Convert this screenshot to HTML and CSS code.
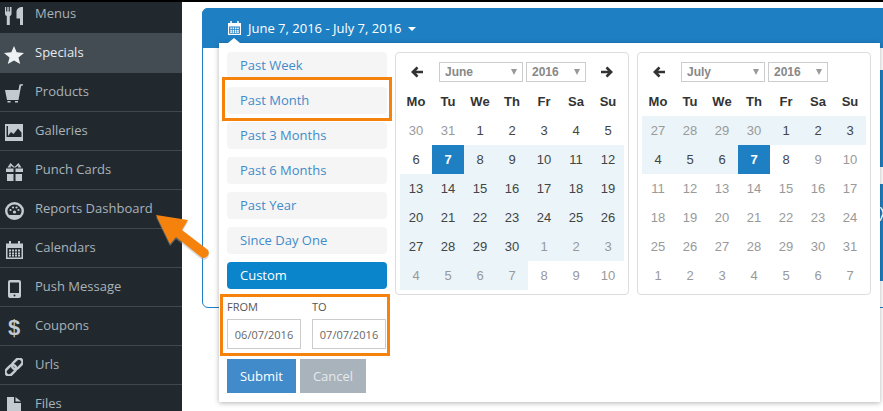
FILE: index.html
```html
<!DOCTYPE html>
<html lang="en">
<head>
<meta charset="utf-8">
<title>Reports Dashboard</title>
<link rel="stylesheet" href="styles.css">
</head>
<body>
<div class="topbar"></div>
<div class="layout">
  <nav class="sidebar">
    <ul class="nav">
      <li class="nav-item nav-first"><span class="nav-icon"><svg width="18" height="18" viewBox="0 0 18 18"><path d="M0 0h1.200v4.500h1.100V0h1.400v4.500h1.100V0H6.500v6.500C6.500 8 5.700 8.600 4.800 9v9H1.800V9C.8 8.600 0 8 0 6.500zM11.500 5C11.500 2 13.500 0 18 0v18h-3v-6.500h-3.500z"/></svg></span>Menus</li>
      <li class="nav-item nav-active"><span class="nav-icon"><svg width="20" height="18" viewBox="0 0 20 18"><path d="M10 0l2.700 6.300 7.300.600-5.500 4.600 1.700 6.500L10 14.500 3.800 18l1.700-6.500L0 6.900l7.300-.600z"/></svg></span>Specials</li>
      <li class="nav-item"><span class="nav-icon"><svg width="18" height="19" viewBox="0 0 18 19"><path d="M0 6h13.500l1-5.500L18 0l-.4 1.800h-1.500L13.500 16H2zM2.500 17h3v1.500h-3zM10 17h3v1.500h-3z"/></svg></span>Products</li>
      <li class="nav-item"><span class="nav-icon"><svg width="18" height="17" viewBox="0 0 18 17"><path fill-rule="evenodd" d="M0 0h18v17H0zM1.500 2v11h15V8.500L13 4.500 8.500 10 6 8l-3 4V2z"/><circle cx="4.500" cy="5" r="1.700"/></svg></span>Galleries</li>
      <li class="nav-item"><span class="nav-icon"><svg width="17" height="19" viewBox="0 0 17 19"><path fill-rule="evenodd" d="M0 6.500h7.500v3.500H0zM9.500 6.500H17v3.500H9.500zM1 12h6.500v7H1zM9.500 12H16v7H9.500zM1.500 5.500L4.500 1 8.500 5l4-4 3 4.500-3.500 0L12.500 3.500 9.500 5.500h-2L4.500 3.500l.5 2z"/></svg></span>Punch Cards</li>
      <li class="nav-item"><span class="nav-icon"><svg width="19" height="18" viewBox="0 0 19 18"><path fill-rule="evenodd" d="M9.500 0a9.500 9 0 1 1 0 18 9.500 9 0 0 1 0-18zM9.500 2.500a7 6.500 0 0 0-7 6.500c0 1.500.5 2.800 1.500 4h11c1-1.200 1.500-2.500 1.500-4a7 6.500 0 0 0-7-6.500z"/><circle cx="5.500" cy="8" r="1.100"/><circle cx="8" cy="5.500" r="1.100"/><circle cx="11.500" cy="5.500" r="1.100"/><circle cx="13.500" cy="8" r="1.100"/><circle cx="9.500" cy="10" r="1.600"/></svg></span>Reports Dashboard</li>
      <li class="nav-item"><span class="nav-icon"><svg width="17" height="18" viewBox="0 0 17 18"><path fill-rule="evenodd" d="M0 2.500h3V0h2v2.500h7V0h2v2.500h3V18H0zM1.500 7v9.500h14V7z"/><path d="M3 8.500h2v2H3zM6 8.500h2v2H6zM9 8.500h2v2H9zM12 8.500h2v2h-2zM3 11.500h2v2H3zM6 11.500h2v2H6zM9 11.500h2v2H9zM12 11.500h2v2h-2zM3 14h2v1.500H3zM6 14h2v1.500H6zM9 14h2v1.500H9zM12 14h2v1.500h-2z"/></svg></span>Calendars</li>
      <li class="nav-item"><span class="nav-icon"><svg width="13" height="18" viewBox="0 0 13 18"><path fill-rule="evenodd" d="M2 0h9a2 2 0 0 1 2 2v14a2 2 0 0 1-2 2H2a2 2 0 0 1-2-2V2a2 2 0 0 1 2-2zM2 2.500v10.500h9V2.500z"/><circle cx="6.500" cy="15.500" r="1" fill="#22292e"/></svg></span>Push Message</li>
      <li class="nav-item"><span class="nav-icon nav-dollar">$</span>Coupons</li>
      <li class="nav-item"><span class="nav-icon"><svg width="18" height="18" viewBox="0 0 18 18"><g fill="none" stroke="currentColor" stroke-width="2.500" transform="rotate(-45 9 9)"><rect x="-1.500" y="5.500" width="12" height="7" rx="3.500"/><rect x="7.500" y="5.500" width="12" height="7" rx="3.500"/></g></svg></span>Urls</li>
      <li class="nav-item"><span class="nav-icon"><svg width="14" height="18" viewBox="0 0 14 18"><path d="M0 0h7v6h7v12H0zM8.500 0L14 4.500H8.500z"/></svg></span>Files</li>
    </ul>
  </nav>
  <main class="main">
    <section class="panel">
      <header class="panel-head">
        <svg class="head-icon" width="13" height="14" viewBox="0 0 17 18"><path fill="#fff" fill-rule="evenodd" d="M0 2.500h3V0h2v2.500h7V0h2v2.500h3V18H0zM1.500 7v9.500h14V7z"/><path fill="#fff" d="M3 8.500h2v2H3zM6 8.500h2v2H6zM9 8.500h2v2H9zM12 8.500h2v2h-2zM3 11.500h2v2H3zM6 11.500h2v2H6zM9 11.500h2v2H9zM12 11.500h2v2h-2zM3 14h2v1.500H3zM6 14h2v1.500H6zM9 14h2v1.500H9zM12 14h2v1.500h-2z"/></svg>
        <span class="head-text">June 7, 2016 - July 7, 2016</span>
        <span class="caret"></span>
      </header>
      <div class="panel-body">
        <div class="stat"></div>
        <div class="stat"><svg class="stat-curve" width="4" height="14" viewBox="0 0 4 14"><path d="M0 0Q4 4 3 7 2 10 0 14" fill="none" stroke="#fff" stroke-width="1.500"/></svg></div>
      </div>
    </section>

    <div class="dropdown">
      <span class="notch"></span>
      <div class="ranges">
        <div class="range">Past Week</div>
        <div class="range">Past Month</div>
        <div class="range">Past 3 Months</div>
        <div class="range">Past 6 Months</div>
        <div class="range">Past Year</div>
        <div class="range">Since Day One</div>
        <div class="range range-active">Custom</div>
        <div class="inputs">
          <label class="field"><span class="field-label">FROM</span><span class="field-input">06/07/2016</span></label>
          <label class="field"><span class="field-label">TO</span><span class="field-input">07/07/2016</span></label>
        </div>
        <div class="actions">
          <button class="btn btn-submit">Submit</button>
          <button class="btn btn-cancel">Cancel</button>
        </div>
        <span class="hl hl-month"></span>
        <span class="hl hl-inputs"></span>
      </div>

      <div class="calendar">
        <div class="cal-nav">
          <svg class="cal-arrow" width="12" height="12" viewBox="0 0 14 13"><path d="M6.500 0l2.200 2.200L6 5h8v3H6l2.700 2.800L6.500 13 0 6.500z"/></svg>
          <span class="select select-month">June<i class="tri"></i></span>
          <span class="select select-year">2016<i class="tri"></i></span>
          <svg class="cal-arrow" width="12" height="12" viewBox="0 0 14 13"><path d="M7.500 0L5.300 2.200 8 5H0v3h8l-2.700 2.800L7.500 13 14 6.500z"/></svg>
        </div>
        <div class="grid">
          <b>Mo</b><b>Tu</b><b>We</b><b>Th</b><b>Fr</b><b>Sa</b><b>Su</b>
          <span class="off">30</span><span class="off">31</span><span>1</span><span>2</span><span>3</span><span>4</span><span>5</span>
          <span>6</span><span class="active">7</span><span class="in">8</span><span class="in">9</span><span class="in">10</span><span class="in">11</span><span class="in">12</span>
          <span class="in">13</span><span class="in">14</span><span class="in">15</span><span class="in">16</span><span class="in">17</span><span class="in">18</span><span class="in">19</span>
          <span class="in">20</span><span class="in">21</span><span class="in">22</span><span class="in">23</span><span class="in">24</span><span class="in">25</span><span class="in">26</span>
          <span class="in">27</span><span class="in">28</span><span class="in">29</span><span class="in">30</span><span class="in off">1</span><span class="in off">2</span><span class="in off">3</span>
          <span class="in off">4</span><span class="in off">5</span><span class="in off">6</span><span class="in off">7</span><span class="off">8</span><span class="off">9</span><span class="off">10</span>
        </div>
      </div>

      <div class="calendar">
        <div class="cal-nav">
          <svg class="cal-arrow" width="12" height="12" viewBox="0 0 14 13"><path d="M6.500 0l2.200 2.200L6 5h8v3H6l2.700 2.800L6.500 13 0 6.500z"/></svg>
          <span class="select select-month">July<i class="tri"></i></span>
          <span class="select select-year">2016<i class="tri"></i></span>
        </div>
        <div class="grid">
          <b>Mo</b><b>Tu</b><b>We</b><b>Th</b><b>Fr</b><b>Sa</b><b>Su</b>
          <span class="in off">27</span><span class="in off">28</span><span class="in off">29</span><span class="in off">30</span><span class="in">1</span><span class="in">2</span><span class="in">3</span>
          <span class="in">4</span><span class="in">5</span><span class="in">6</span><span class="active">7</span><span>8</span><span class="off">9</span><span class="off">10</span>
          <span class="off">11</span><span class="off">12</span><span class="off">13</span><span class="off">14</span><span class="off">15</span><span class="off">16</span><span class="off">17</span>
          <span class="off">18</span><span class="off">19</span><span class="off">20</span><span class="off">21</span><span class="off">22</span><span class="off">23</span><span class="off">24</span>
          <span class="off">25</span><span class="off">26</span><span class="off">27</span><span class="off">28</span><span class="off">29</span><span class="off">30</span><span class="off">31</span>
          <span class="off">1</span><span class="off">2</span><span class="off">3</span><span class="off">4</span><span class="off">5</span><span class="off">6</span><span class="off">7</span>
        </div>
      </div>
    </div>

    <svg class="pointer" width="62" height="52" viewBox="0 0 62 52"><path d="M1 1L33 6 27 16 53 36Q55 40 52 42.500 49 45 46 43L21 23 15 30z" fill="#a8a8a8" opacity=".45" transform="translate(0 2)"/><path d="M1 1L33 6 27 16 53 36Q55 40 52 42.500 49 45 46 43L21 23 15 30z" fill="#f5820d"/></svg>
  </main>
</div>
</body>
</html>
```
FILE: styles.css
```css
* { box-sizing: border-box; }
html, body { margin: 0; height: 100%; }
body {
  width: 883px;
  height: 411px;
  overflow: hidden;
  background: #fff;
  font-family: "Open Sans", sans-serif;
  font-size: 13px;
}
.topbar { height: 2px; background: #000; }
.layout { display: flex; height: 409px; overflow: hidden; }

.sidebar { width: 182px; flex: none; background: #22292e; overflow: hidden; }
.nav { list-style: none; margin: -7px 0 0; padding: 0; }
.nav-item {
  display: flex;
  align-items: center;
  height: 39px;
  padding-bottom: 2px;
  gap: 7px;
  color: #a9b3ba;
  border-bottom: 1px solid #41484d;
}
.nav-first { border-bottom-color: #434c53; }
.nav-active { background: #434c53; color: #e6eaed; border-bottom-color: #434c53; }
.nav-icon {
  width: 28px;
  height: 20px;
  flex: none;
  margin-top: 5px;
  display: flex;
  align-items: center;
  justify-content: center;
  color: #c3cbd1;
}
.nav-active .nav-icon { color: #eef1f3; }
.nav-icon svg { fill: currentColor; display: block; }
.nav-dollar { font: bold 22px "Liberation Sans", sans-serif; }

.main { position: relative; flex: 1; min-width: 0; padding: 6px 0 0 20px; }
.panel {
  width: 700px;
  height: 300px;
  border: 1px solid #1f7fc3;
  border-radius: 6px;
}
.panel-head {
  height: 40px;
  margin: -1px -1px 0;
  padding: 0 0 0 26px;
  background: #1f7fc3;
  border-radius: 6px 6px 0 0;
  display: flex;
  align-items: center;
  color: #fff;
  font-size: 13px;
}
.head-text { margin-left: 7px; }
.caret {
  margin-left: 6px;
  margin-top: 2px;
  border-top: 4px solid #fff;
  border-left: 4px solid transparent;
  border-right: 4px solid transparent;
}
.panel-body { padding: 22px 0 0 677px; }
.stat { height: 97px; margin-bottom: 17px; background: #1f7fc3; position: relative; }
.stat-curve { position: absolute; left: 0; top: 23px; }

.dropdown {
  position: absolute;
  left: 37px;
  top: 41px;
  width: 661px;
  height: 359px;
  padding: 9px 8px;
  display: flex;
  gap: 8px;
  background: #fff;
  box-shadow: 0 1px 5px rgba(0, 0, 0, .3);
}
.notch {
  position: absolute;
  left: 9px;
  top: -5px;
  border-bottom: 5px solid #fff;
  border-left: 6px solid transparent;
  border-right: 6px solid transparent;
}
.ranges { position: relative; width: 160px; flex: none; }
.range {
  height: 27px;
  margin-bottom: 8px;
  padding-left: 13px;
  line-height: 27px;
  background: #f5f5f5;
  border-radius: 4px;
  color: #428bca;
}
.range-active { background: #0a85cb; color: #fff; margin-bottom: 11px; }
.inputs { display: flex; gap: 11px; }
.field { display: block; width: 74px; }
.field-label { display: block; height: 19px; font-size: 11px; line-height: 14px; color: #555; }
.field-input {
  display: block;
  height: 30px;
  border: 1px solid #ccc;
  font-size: 11px;
  line-height: 30px;
  text-align: center;
  color: #666;
}
.actions { display: flex; gap: 4px; margin-top: 10px; }
.btn {
  height: 34px;
  border: 0;
  padding: 0;
  font: 13px "Open Sans", sans-serif;
}
.btn-submit { width: 69px; background: #428bca; color: #fff; }
.btn-cancel { width: 66px; background: #a8b3bb; color: #e6eaec; }
.hl { position: absolute; border: 3px solid #f5820d; pointer-events: none; }
.hl-month { left: -5px; top: 25px; width: 170px; height: 44px; }
.hl-inputs { left: -7px; top: 242px; width: 170px; height: 62px; }

.calendar {
  width: 234px;
  height: 243px;
  flex: none;
  padding: 9px 4px 0;
  border: 1px solid #ddd;
  border-radius: 4px;
  font-family: "Liberation Sans", sans-serif;
  font-size: 13px;
  color: #444;
}
.cal-nav { height: 25px; display: flex; align-items: flex-start; padding-left: 11px; }
.cal-arrow { fill: #333; flex: none; margin-top: 4px; }
.select {
  height: 20px;
  margin-left: 3px;
  padding-left: 5px;
  border: 1px solid #ccc;
  color: #888;
  font-weight: bold;
  font-size: 12px;
  line-height: 18px;
  position: relative;
}
.select-month { width: 84px; margin-left: 16px; }
.select-year { width: 60px; }
.select-year + .cal-arrow { margin-left: 15px; }
.tri {
  position: absolute;
  right: 5px;
  top: 6px;
  border-top: 6px solid #999;
  border-left: 3.500px solid transparent;
  border-right: 3.500px solid transparent;
}
.grid {
  display: grid;
  grid-template-columns: repeat(7, 32px);
  grid-auto-rows: 29px;
  text-align: center;
  line-height: 29px;
}
.grid b { font-weight: bold; color: #333; }
.in { background: #ebf4f8; }
.off { color: #999; }
.active { background: #1f7fc3; color: #fff; font-weight: bold; }

.pointer { position: absolute; left: -27px; top: 212px; }
```
